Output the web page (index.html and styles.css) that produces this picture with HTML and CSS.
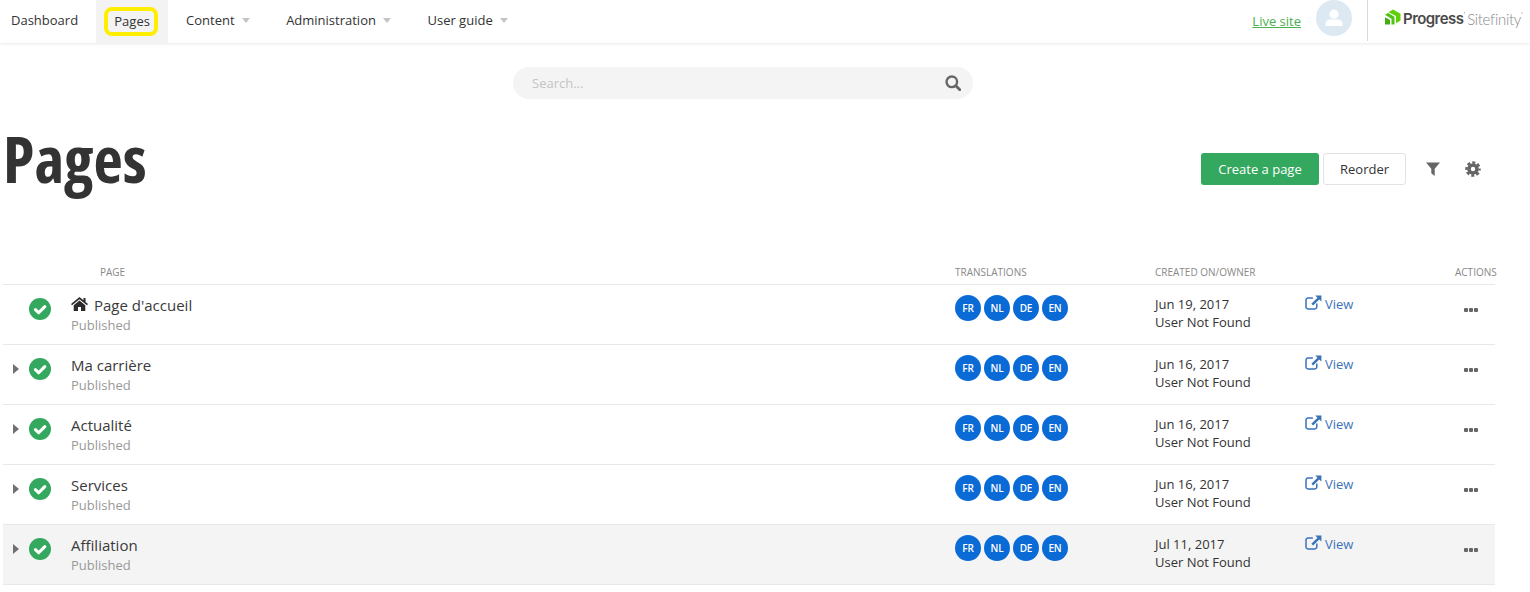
FILE: index.html
```html
<!DOCTYPE html>
<html lang="en">
<head>
<meta charset="utf-8">
<title>Pages</title>
<link rel="stylesheet" href="styles.css">
</head>
<body>
<svg class="defs" width="0" height="0" aria-hidden="true">
  <symbol id="i-check" viewBox="0 0 24 24"><path d="M7 12.600l3.500 3.500 6.700-6.700" fill="none" stroke="#fff" stroke-width="3.400" stroke-linecap="round" stroke-linejoin="round"/></symbol>
  <symbol id="i-ext" viewBox="0 0 17 15"><path d="M11.800 8.600v3.400a1.900 1.900 0 0 1-1.900 1.900H2.900A1.900 1.900 0 0 1 1 12V5a1.900 1.900 0 0 1 1.900-1.900h5" fill="none" stroke="currentColor" stroke-width="1.500"/><path d="M10.200.4h6.200v6.200l-2.200-2.200-6.100 6.100-1.700-1.700 6.100-6.100z" fill="currentColor"/></symbol>
</svg>
<header class="topbar">
  <nav class="nav">
    <a class="nav-item nav-first">Dashboard</a>
    <a class="nav-item nav-active"><span class="mark">Pages</span></a>
    <a class="nav-item">Content<i class="caret"></i></a>
    <a class="nav-item">Administration<i class="caret"></i></a>
    <a class="nav-item">User guide<i class="caret"></i></a>
  </nav>
  <div class="top-right">
    <a class="live">Live site</a>
    <span class="avatar"><svg width="20" height="20" viewBox="0 0 20 20"><circle cx="10" cy="6.200" r="4.600" fill="#fff"/><path d="M1.500 18v-2.200c0-2.600 2.400-4.300 4.800-4.300h7.400c2.400 0 4.800 1.700 4.800 4.300V18z" fill="#fff"/></svg></span>
    <span class="divider"></span>
    <span class="logo">
      <svg class="logo-mark" width="16" height="16" viewBox="0 0 16 16"><path d="M3.500 3.200 8 .5l7.500 4.300v6.700L11 14.300V7.100z" fill="#5ed000"/><path d="M0 5.800l3-1.700 6.500 3.700v7.700l-3-.0V9.700z" fill="#4cc410"/><path d="M0 8.200l5 2.800v4.500H0z" fill="#43ad12"/></svg>
      <b class="logo-a">Progress</b><sup class="logo-r">&#39;</sup><span class="logo-b">Sitefinity</span><sup class="logo-t">&#39;</sup>
    </span>
  </div>
</header>

<div class="search-wrap">
  <div class="search">
    <span class="placeholder">Search...</span>
    <svg width="16" height="16" viewBox="0 0 16 16"><circle cx="6.800" cy="6.800" r="5.300" fill="none" stroke="#666" stroke-width="2.400"/><path d="M10.800 10.800l4 4" stroke="#666" stroke-width="2.800" stroke-linecap="round"/></svg>
  </div>
</div>

<section class="title-row">
  <h1 class="title"><span>Pages</span></h1>
  <div class="tools">
    <a class="btn btn-primary">Create a page</a>
    <a class="btn btn-plain">Reorder</a>
    <svg class="tool-filter" width="14" height="14" viewBox="0 0 14 14"><path d="M0 .5h14L8.700 6.800V14L5.300 11.300V6.800z" fill="#666"/></svg>
    <svg class="tool-gear" width="16" height="16" viewBox="0 0 16 16"><circle cx="8" cy="8" r="4" fill="none" stroke="#666" stroke-width="3.600"/><circle cx="8" cy="8" r="6.500" fill="none" stroke="#666" stroke-width="2.600" stroke-dasharray="3 2.105" stroke-dashoffset="1.500"/></svg>
  </div>
</section>

<section class="table">
  <div class="row head">
    <span class="h-page">Page</span>
    <span>Translations</span>
    <span>Created on/owner</span>
    <span></span>
    <span class="h-actions">Actions</span>
  </div>

  <div class="row item">
    <div class="cell-name">
      <span class="arrow-slot"></span>
      <span class="status"><svg width="22" height="22"><use href="#i-check"/></svg></span>
      <div class="name">
        <div class="name-title"><svg class="home" width="17" height="14" viewBox="0 0 17 14"><path d="M8.500 0 12.500 3.300V1h2v4L17 7.100l-1 1.200L8.500 2.300 1 8.300 0 7.100z" fill="#2b2b2b"/><path d="M8.500 3.500 14.300 8.200V14H10V10H7v4H2.700V8.200z" fill="#2b2b2b"/></svg>Page d'accueil</div>
        <div class="name-sub">Published</div>
      </div>
    </div>
    <div class="langs"><span>FR</span><span>NL</span><span>DE</span><span>EN</span></div>
    <div class="meta">Jun 19, 2017<br>User Not Found</div>
    <a class="view"><svg width="17" height="15"><use href="#i-ext"/></svg>View</a>
    <span class="dots"><i></i><i></i><i></i></span>
  </div>

  <div class="row item">
    <div class="cell-name">
      <span class="arrow-slot"><i class="arrow"></i></span>
      <span class="status"><svg width="22" height="22"><use href="#i-check"/></svg></span>
      <div class="name">
        <div class="name-title">Ma carrière</div>
        <div class="name-sub">Published</div>
      </div>
    </div>
    <div class="langs"><span>FR</span><span>NL</span><span>DE</span><span>EN</span></div>
    <div class="meta">Jun 16, 2017<br>User Not Found</div>
    <a class="view"><svg width="17" height="15"><use href="#i-ext"/></svg>View</a>
    <span class="dots"><i></i><i></i><i></i></span>
  </div>

  <div class="row item">
    <div class="cell-name">
      <span class="arrow-slot"><i class="arrow"></i></span>
      <span class="status"><svg width="22" height="22"><use href="#i-check"/></svg></span>
      <div class="name">
        <div class="name-title">Actualité</div>
        <div class="name-sub">Published</div>
      </div>
    </div>
    <div class="langs"><span>FR</span><span>NL</span><span>DE</span><span>EN</span></div>
    <div class="meta">Jun 16, 2017<br>User Not Found</div>
    <a class="view"><svg width="17" height="15"><use href="#i-ext"/></svg>View</a>
    <span class="dots"><i></i><i></i><i></i></span>
  </div>

  <div class="row item">
    <div class="cell-name">
      <span class="arrow-slot"><i class="arrow"></i></span>
      <span class="status"><svg width="22" height="22"><use href="#i-check"/></svg></span>
      <div class="name">
        <div class="name-title">Services</div>
        <div class="name-sub">Published</div>
      </div>
    </div>
    <div class="langs"><span>FR</span><span>NL</span><span>DE</span><span>EN</span></div>
    <div class="meta">Jun 16, 2017<br>User Not Found</div>
    <a class="view"><svg width="17" height="15"><use href="#i-ext"/></svg>View</a>
    <span class="dots"><i></i><i></i><i></i></span>
  </div>

  <div class="row item item-hover">
    <div class="cell-name">
      <span class="arrow-slot"><i class="arrow"></i></span>
      <span class="status"><svg width="22" height="22"><use href="#i-check"/></svg></span>
      <div class="name">
        <div class="name-title">Affiliation</div>
        <div class="name-sub">Published</div>
      </div>
    </div>
    <div class="langs"><span>FR</span><span>NL</span><span>DE</span><span>EN</span></div>
    <div class="meta">Jul 11, 2017<br>User Not Found</div>
    <a class="view"><svg width="17" height="15"><use href="#i-ext"/></svg>View</a>
    <span class="dots"><i></i><i></i><i></i></span>
  </div>
</section>
</body>
</html>
```
FILE: styles.css
```css
* { box-sizing: border-box; }
html, body { margin: 0; padding: 0; }
body {
  background: #fff;
  color: #333;
  font-family: "Open Sans", "Liberation Sans", sans-serif;
  font-size: 13px;
  overflow: hidden;
}
.defs { position: absolute; }

.topbar {
  height: 43px;
  display: flex;
  justify-content: space-between;
  box-shadow: 0 1px 3px rgba(0, 0, 0, .09);
}
.nav { display: flex; }
.nav-item {
  display: flex;
  align-items: center;
  padding: 0 18px 3px;
  height: 43px;
  color: #333;
  white-space: nowrap;
}
.nav-first { padding: 0 18px 3px 11px; }
.nav-active {
  background: #f3f3f3;
  padding: 0 8px 0;
  width: 72px;
}
.mark {
  border: 4px solid #ffee00;
  border-radius: 8px;
  width: 54px;
  height: 29px;
  padding: 0 0 2px 2px;
  display: flex;
  align-items: center;
  justify-content: center;
}
.caret {
  width: 0;
  height: 0;
  margin-left: 7.500px;
  border-left: 4.500px solid transparent;
  border-right: 4.500px solid transparent;
  border-top: 5px solid #c4c4c4;
}

.top-right { display: flex; align-items: flex-start; }
.live {
  color: #4caf50;
  text-decoration: underline;
  margin-top: 12px;
}
.avatar {
  width: 36px;
  height: 36px;
  margin-left: 15px;
  border-radius: 50%;
  background: #dce9f2;
  display: flex;
  align-items: center;
  justify-content: center;
}
.divider {
  width: 1px;
  height: 41px;
  margin-left: 15px;
  background: #d9d9d9;
}
.logo {
  display: flex;
  align-items: flex-start;
  margin-left: 17px;
  width: 145px;
  padding-top: 9px;
  white-space: nowrap;
}
.logo-mark { flex: none; }
.logo-a {
  margin-left: 2px;
  font-family: "Inter", "Liberation Sans", sans-serif;
  font-size: 15px;
  letter-spacing: -.55px;
  line-height: 20px;
  font-weight: 600;
  color: #4a4a4a;
}
.logo-b {
  font-family: "Lato", sans-serif;
  font-size: 15px;
  font-weight: 300;
  line-height: 20px;
  color: #888;
  margin-left: 2px;
  letter-spacing: -.3px;
}
.logo-r, .logo-t { font-size: 8px; line-height: 10px; color: #999; }

.search-wrap { display: flex; margin: 24px 0 0 513px; }
.search {
  width: 460px;
  height: 32px;
  border-radius: 16px;
  background: #f4f4f4;
  display: flex;
  align-items: center;
  justify-content: space-between;
  padding: 0 12px 0 19px;
}
.placeholder { color: #c4c4c4; }

.title-row {
  display: flex;
  justify-content: space-between;
  align-items: flex-start;
  height: 168px;
  padding-left: 3px;
}
.title {
  margin: 18px 0 0;
  font-size: 64px;
  line-height: 84px;
  font-weight: 700;
  font-stretch: condensed;
  color: #333;
}
.title span { display: inline-block; }
.tools {
  display: flex;
  align-items: center;
  margin: 54px 49px 0 0;
}
.btn {
  height: 32px;
  display: flex;
  align-items: center;
  justify-content: center;
  border-radius: 3px;
}
.btn-primary { width: 118px; background: #34a85e; color: #fff; }
.btn-plain { width: 83px; margin-left: 4px; background: #fff; border: 1px solid #e3e3e3; color: #333; }
.tool-filter { margin-left: 20px; }
.tool-gear { margin-left: 25px; }

.table { margin-left: 3px; width: 1492px; }
.row {
  display: grid;
  grid-template-columns: 952px 200px 150px 150px 40px;
}
.head {
  height: 18px;
  border-bottom: 1px solid #e8e8e8;
  font-size: 10px;
  line-height: 10px;
  color: #888;
  text-transform: uppercase;
  white-space: nowrap;
  align-items: start;
}
.h-page { padding-left: 97px; }
.item {
  height: 60px;
  border-bottom: 1px solid #e8e8e8;
}
.item-hover { background: #f4f4f4; }
.cell-name { display: flex; }
.arrow-slot { width: 26px; display: flex; padding: 19px 0 0 10px; }
.arrow {
  width: 0;
  height: 0;
  border-top: 5px solid transparent;
  border-bottom: 5px solid transparent;
  border-left: 6px solid #707070;
}
.status {
  width: 22px;
  height: 22px;
  margin-top: 13px;
  border-radius: 50%;
  background: #34a85e;
  display: block;
}
.status svg { display: block; }
.name { margin-left: 20px; padding-top: 9px; }
.name-title { font-size: 15px; line-height: 22px; color: #3a3a3a; display: flex; align-items: center; }
.home { margin-right: 6px; margin-top: -3px; }
.name-sub { font-size: 13px; line-height: 18px; color: #999; }
.langs { display: flex; gap: 3px; padding-top: 10px; height: 36px; }
.langs span {
  width: 26px;
  height: 26px;
  border-radius: 50%;
  background: #0b6bd6;
  color: #fff;
  font-size: 10px;
  font-weight: 600;
  letter-spacing: -.2px;
  display: flex;
  align-items: center;
  justify-content: center;
}
.meta { padding-top: 10px; line-height: 18px; color: #333; white-space: nowrap; }
.view {
  display: flex;
  align-items: flex-start;
  gap: 3px;
  padding-top: 10px;
  line-height: 18px;
  color: #3b73b9;
}
.dots { display: flex; gap: 1px; padding: 23px 0 0 9px; }
.dots i { width: 4px; height: 4px; background: #666; border-radius: 1px; }
```
